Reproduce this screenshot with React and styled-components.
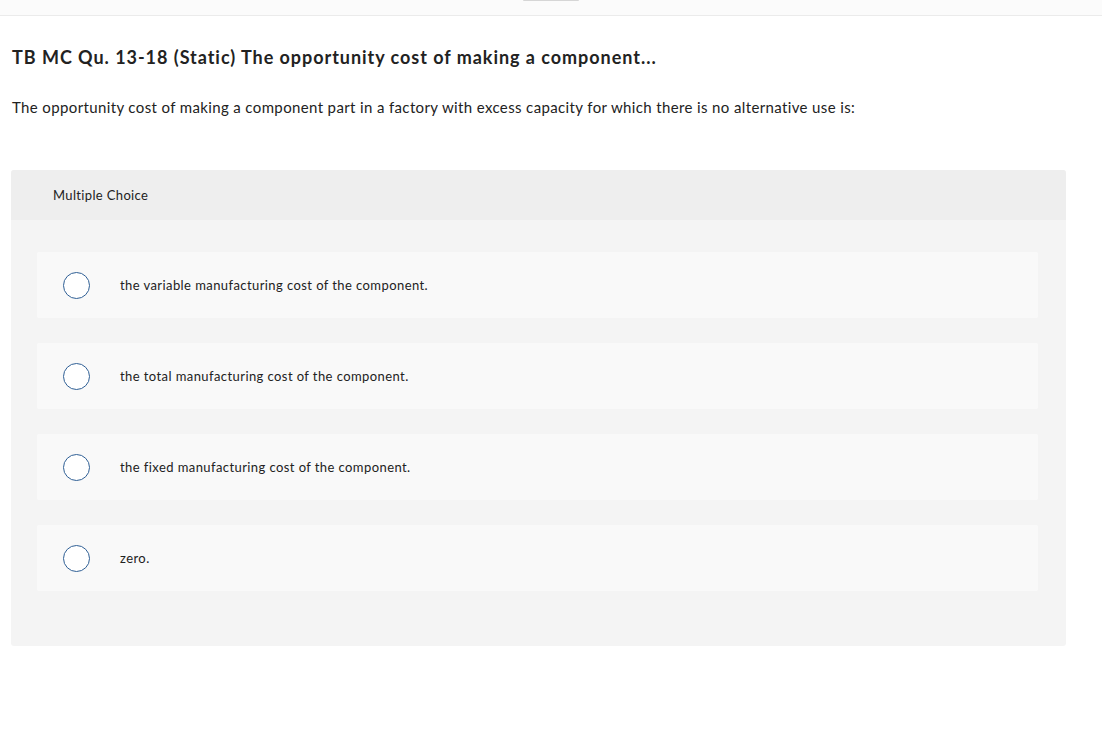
import React from "react";
import styled, { createGlobalStyle } from "styled-components";

const GlobalStyle = createGlobalStyle`
  html, body {
    margin: 0;
    padding: 0;
    background: #ffffff;
  }
  body {
    font-family: Lato, "Liberation Sans", Arial, sans-serif;
    color: #222222;
  }
`;

const choices = [
  "the variable manufacturing cost of the component.",
  "the total manufacturing cost of the component.",
  "the fixed manufacturing cost of the component.",
  "zero.",
];

function App() {
  return (
    <Page>
      <GlobalStyle />
      <TopBar>
        <Handle />
      </TopBar>
      <Content>
        <Title>TB MC Qu. 13-18 (Static) The opportunity cost of making a component...</Title>
        <Prompt>
          The opportunity cost of making a component part in a factory with excess capacity for which there is no
          alternative use is:
        </Prompt>
        <Panel>
          <PanelHeader>Multiple Choice</PanelHeader>
          <ChoiceList>
            {choices.map((c) => (
              <Choice key={c}>
                <Radio />
                <ChoiceText>{c}</ChoiceText>
              </Choice>
            ))}
          </ChoiceList>
        </Panel>
      </Content>
    </Page>
  );
}

export default App;

const Page = styled.div`
  width: 100%;
  min-height: 738px;
  background: #ffffff;
`;

const TopBar = styled.div`
  height: 15px;
  background: #fbfbfb;
  border-bottom: 1px solid #ebebeb;
  display: flex;
  justify-content: center;
`;

const Handle = styled.div`
  width: 56px;
  height: 1px;
  background: #d6d6d6;
  border-radius: 0 0 3px 3px;
`;

const Content = styled.div`
  padding: 0 36px 0 11px;
`;

const Title = styled.h1`
  margin: 0;
  padding: 29px 0 0 1px;
  font-size: 18px;
  font-weight: 700;
  line-height: 24px;
  letter-spacing: 0.96px;
  color: #222222;
`;

const Prompt = styled.p`
  margin: 0;
  padding: 28px 0 0 1px;
  font-size: 15px;
  line-height: 20px;
  letter-spacing: 0.37px;
  color: #222222;
`;

const Panel = styled.section`
  margin-top: 53px;
  background: #f4f4f4;
  border-radius: 3px;
  overflow: hidden;
  padding-bottom: 55px;
`;

const PanelHeader = styled.div`
  height: 50px;
  display: flex;
  align-items: center;
  padding-left: 42px;
  background: #eeeeee;
  font-size: 13px;
  letter-spacing: 0.35px;
  color: #222222;
`;

const ChoiceList = styled.div`
  display: flex;
  flex-direction: column;
  gap: 25px;
  padding: 32px 28px 0 26px;
`;

const Choice = styled.label`
  height: 66px;
  display: flex;
  align-items: center;
  padding-left: 26px;
  background: #f9f9f9;
  border-radius: 2px;
  cursor: pointer;
`;

const Radio = styled.span`
  width: 25px;
  height: 25px;
  border: 1.5px solid #2f5f95;
  border-radius: 50%;
  background: #ffffff;
  flex-shrink: 0;
`;

const ChoiceText = styled.span`
  margin-left: 30px;
  font-size: 13px;
  letter-spacing: 0.42px;
  color: #222222;
`;
